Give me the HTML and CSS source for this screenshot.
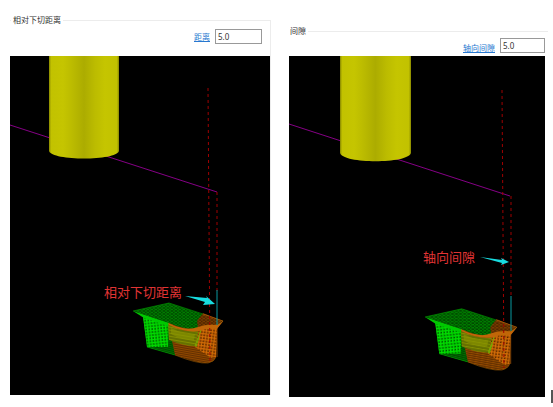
FILE: index.html
```html
<!DOCTYPE html>
<html lang="zh-CN">
<head>
<meta charset="utf-8">
<title>相对下切距离 / 间隙</title>
<link rel="stylesheet" href="styles.css">
</head>
<body>
<svg class="defs" aria-hidden="true">
  <defs>
    <linearGradient id="metal">
      <stop offset="0" stop-color="#868600"/>
      <stop offset=".03" stop-color="#c2c200"/>
      <stop offset=".2" stop-color="#c5c500"/>
      <stop offset=".32" stop-color="#bcbc00"/>
      <stop offset=".5" stop-color="#acac00"/>
      <stop offset=".66" stop-color="#bcbc00"/>
      <stop offset=".8" stop-color="#c5c500"/>
      <stop offset=".97" stop-color="#c2c200"/>
      <stop offset="1" stop-color="#868600"/>
    </linearGradient>
    <pattern id="top-green" width="4" height="3" patternUnits="userSpaceOnUse">
      <rect width="4" height="3" fill="#004a00"/>
      <path d="M0 0L4 2M0 3L4 1" stroke="#008c00" stroke-width=".7"/>
    </pattern>
    <pattern id="wall-green" width="3" height="3" patternUnits="userSpaceOnUse" patternTransform="rotate(-6)">
      <rect width="3" height="3" fill="#00a000"/>
      <path d="M0 .5H3M.5 0V3" stroke="#00dc00"/>
      <path d="M2 2h1" stroke="#004c00"/>
    </pattern>
    <pattern id="dark-green" width="3" height="2" patternUnits="userSpaceOnUse" patternTransform="rotate(14)">
      <rect width="3" height="2" fill="#004a00"/>
      <path d="M0 .5H3" stroke="#007a00" stroke-width=".7"/>
    </pattern>
    <pattern id="top-brown" width="4" height="3" patternUnits="userSpaceOnUse">
      <rect width="4" height="3" fill="#512600"/>
      <path d="M0 0L4 2M0 3L4 1" stroke="#8a4700" stroke-width=".6"/>
    </pattern>
    <pattern id="dark-orange" width="3" height="2" patternUnits="userSpaceOnUse" patternTransform="rotate(10)">
      <rect width="3" height="2" fill="#653000"/>
      <path d="M0 .5H3" stroke="#a05200" stroke-width=".7"/>
    </pattern>
    <pattern id="wall-orange" width="3" height="3" patternUnits="userSpaceOnUse" patternTransform="rotate(8)">
      <rect width="3" height="3" fill="#984800"/>
      <path d="M.5 0V3M0 .5H3" stroke="#d87008" stroke-width=".8"/>
      <path d="M2 2v1" stroke="#4c2400"/>
    </pattern>
    <pattern id="olive" width="3" height="3" patternUnits="userSpaceOnUse" patternTransform="rotate(10)">
      <rect width="3" height="3" fill="#667000"/>
      <path d="M0 .5H3" stroke="#8a9400" stroke-width=".8"/>
    </pattern>
    <g id="part">
      <path d="M10 6L38 12 42 44 14 36Z" fill="url(#dark-green)"/>
      <path d="M10 6L36 13 35 34 34 41 14 36Z" fill="url(#wall-green)"/>
      <path d="M34 36L41 37 42 44 14 36Z" fill="url(#dark-green)"/>
      <path d="M35 11L84 14 83 46Q81 52 72 52 62 51 42 44Z" fill="url(#dark-orange)"/>
      <path d="M35 13Q50 22 68 20L66 35Q52 36 36 29Z" fill="url(#olive)"/>
      <path d="M38 17Q52 24 62 23L61 29Q48 29 38 23Z" fill="#8c9600" opacity=".6"/>
      <path d="M66 18L84 14 83 46 78 47 62 36Z" fill="url(#wall-orange)"/>
      <path d="M68 19l-6 16m4-9l-3 10" stroke="#73a900" fill="none"/>
      <path d="M0 0L36 -8 90 10 84 14Q72 14 66 17 54 20 36 12Z" fill="url(#top-green)"/>
      <path d="M64 10L70 2 90 10 84 14Q72 14 65 17Z" fill="url(#top-brown)"/>
      <path d="M0 0L36 12 35 15 11 7Z" fill="#00c800"/>
      <path d="M35 12Q54 21 65 16 73 13 84 14L90 10 84 18Q74 17 66 20 52 22 36 14Z" fill="#c06608"/>
      <path d="M0 0L36 -8 70 3" stroke="#009000" stroke-width=".7" fill="none"/>
      <path d="M70 3L90 10 84 17V46" stroke="#b86008" stroke-width=".7" fill="none"/>
      <path d="M14 36L42 44" stroke="#00a000" stroke-width=".6" fill="none"/>
      <path d="M42 44Q64 53 75 52 81 51 83 46" stroke="#a05c00" stroke-width=".6" fill="none"/>
    </g>
  </defs>
</svg>

<main class="sheet">
  <fieldset class="group group-plunge">
    <legend>相对下切距离</legend>
    <div class="field">
      <label for="distance">距离</label>
      <input id="distance" type="text" value="5.0">
    </div>
    <svg class="view" viewBox="0 0 260 339" role="img" aria-label="相对下切距离">
      <path d="M0 69L207 136" class="path"/>
      <path d="M39 0H109V95C106 105 42 105 39 95Z" fill="url(#metal)"/>
      <use href="#part" x="123" y="255"/>
      <path d="M198 32L200 306M207 136V235" class="rapid"/>
      <path d="M207 234V269" class="plunge"/>
      <path d="M175 240L197 242 196 240 205 248 193 249 195 246Z" class="arrow"/>
      <text x="94" y="241" class="note">相对下切距离</text>
    </svg>
  </fieldset>

  <fieldset class="group group-gap">
    <legend>间隙</legend>
    <div class="field">
      <label for="axial">轴向间隙</label>
      <input id="axial" type="text" value="5.0">
    </div>
    <svg class="view" viewBox="0 0 256 341" role="img" aria-label="轴向间隙">
      <path d="M0 68L221 140" class="path"/>
      <path d="M51 0H122V97C119 108 54 108 51 97Z" fill="url(#metal)"/>
      <use href="#part" transform="translate(136 261) scale(1.02)"/>
      <path d="M213 34L215 312M222 140V240" class="rapid"/>
      <path d="M222 240V275" class="plunge"/>
      <path d="M191 201L213 204 212 202 220 206 212 209 213 207Z" class="arrow"/>
      <text x="134" y="206" class="note">轴向间隙</text>
    </svg>
  </fieldset>
  <span class="caret"></span>
</main>
</body>
</html>
```
FILE: styles.css
```css
* {
  box-sizing: border-box;
}

body {
  margin: 0;
  background: #fff;
  color: #333;
  font: 8px/10px "Noto Sans", "Noto Sans CJK SC", sans-serif;
}

.defs {
  position: absolute;
  width: 0;
  height: 0;
}

.sheet {
  display: grid;
  grid-template-columns: 279fr 259fr 5px;
  align-items: start;
  padding: 15px 0 0 10px;
}

.group {
  min-width: 0;
  margin: 0;
  padding: 0;
  border: 0 solid #ececec;
  border-top-width: 1px;
}

.group-plunge {
  margin-right: 18px;
  border-right-width: 1px;
}

.group-gap {
  margin: 11px 0 6px;
}

legend {
  margin-left: 1px;
  padding: 0 2px;
}

.group-gap legend {
  margin-left: 0;
  padding-left: 1px;
}

.field {
  display: flex;
  align-items: center;
  justify-content: flex-end;
  gap: 5px;
  padding: 4px 8px 12px 0;
}

.group-gap .field {
  align-items: flex-end;
  padding: 2px 3px 3px 0;
}

.field label {
  color: #2878d0;
  text-decoration: underline;
}

.field input {
  width: 47px;
  height: 15px;
  padding: 0 2px;
  border: 1px solid #999;
  border-radius: 0;
  background: #fff;
  color: #333;
  font: inherit;
}

.group-gap input {
  width: 45px;
}

.view {
  display: block;
  width: 100%;
  height: auto;
  background: #000;
}

.group-gap .view {
  width: calc(100% - 3px);
}

.path {
  fill: none;
  stroke: #850085;
}

.rapid {
  fill: none;
  stroke: #a00000;
  stroke-dasharray: 3 3;
}

.plunge {
  fill: none;
  stroke: #0899a0;
}

.arrow {
  fill: #18dce0;
}

.note {
  fill: #e03434;
  font-size: 13px;
}

.caret {
  align-self: end;
  justify-self: end;
  width: 2px;
  height: 13px;
  background: #555;
}
```
